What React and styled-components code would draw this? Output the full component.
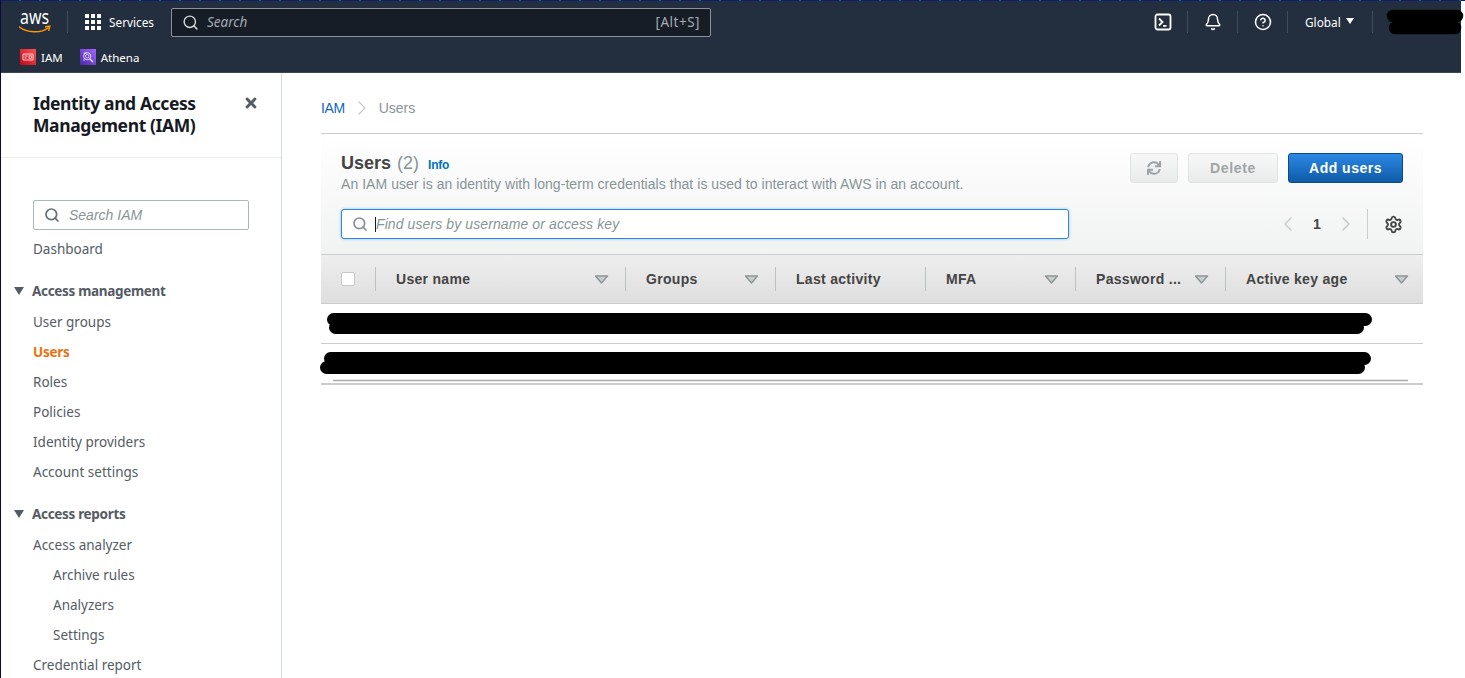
import React from 'react';
import styled, { createGlobalStyle } from 'styled-components';
import { Search, Bell, CircleHelp, Settings, ChevronLeft, ChevronRight } from 'lucide-react';
import { FaTimes, FaSync } from 'react-icons/fa';

const Global = createGlobalStyle`
  html, body { margin: 0; padding: 0; background: #fff; }
  * { box-sizing: border-box; }
`;

const Page = styled.div`
  width: 1465px; height: 678px; overflow: hidden; position: relative;
  background: #fff; border-left: 1px solid #0b0b3b;
  font-family: "Liberation Sans", Arial, sans-serif;
`;
const TopEdge = styled.div`
  height: 1px; width: 1464px;
  background: repeating-linear-gradient(90deg, #0a1f6e 0 18px, #0f6c8c 18px 20px);
`;
const Header = styled.header`
  width: 1460px; height: 72px; background: #232f3e; color: #fff;
  border-bottom: 1px solid #3d4754;
  font-family: "Noto Sans", sans-serif;
  display: flex; flex-direction: column;
`;
const TopRow = styled.div`
  height: 42px; flex: none; display: flex; align-items: center; padding-left: 18px;
`;
const Logo = styled.svg`width: 32px; height: 24px; flex: none; overflow: visible;`;
const VLine = styled.span`
  width: 1px; height: 22px; background: #414d5c; flex: none;
  margin-left: ${p => p.$ml || 0}px;
`;
const Services = styled.div`
  display: flex; align-items: center; gap: 8px; margin-left: 17px; font-size: 11.8px; color: #fff; width: 70px;
`;
const GridIcon = styled.div`
  display: grid; grid-template-columns: repeat(3, 4px); gap: 2px;
  & > i { display: block; width: 4px; height: 4px; background: #fff; }
`;
const GlobalSearch = styled.div`
  margin-left: 16px; width: 540px; height: 29px; background: #161d26;
  border: 1px solid #8d9299; border-radius: 2px;
  display: flex; align-items: center; padding: 0 10px 0 10px; gap: 8px;
  color: #d5dbdb; font-size: 13.5px;
`;
const SearchHint = styled.span`flex: 1; font-style: italic; color: #a5abb2;`;
const Shortcut = styled.span`color: #a5abb2; font-size: 13.5px; letter-spacing: .5px;`;
const Tools = styled.div`
  margin-left: auto; display: flex; align-items: center; height: 100%;
`;
const ToolCell = styled.div`
  width: 49px; display: flex; justify-content: center; align-items: center;
`;
const Region = styled.div`
  display: flex; align-items: center; gap: 5px; font-size: 11.8px; padding-left: 17px; width: 84px;
  &::after { content: ""; border-left: 4.5px solid transparent; border-right: 4.5px solid transparent; border-top: 6px solid #fff; margin-top: -2px; }
`;
const AccountSlot = styled.div`width: 88px;`;
const Favs = styled.div`
  display: flex; align-items: center; padding-left: 19px; gap: 17px; font-size: 11.5px; height: 28px;
`;
const Fav = styled.div`display: flex; align-items: center; gap: 5px;`;
const FavIcon = styled.svg`width: 16px; height: 16px; flex: none;`;

const Body = styled.div`display: flex; height: 605px;`;
const Side = styled.aside`
  width: 281px; flex: none; border-right: 1px solid #d5dbdb; color: #545b64;
  font-family: "Noto Sans", sans-serif; font-size: 13.5px; overflow: hidden;
`;
const SideHead = styled.div`
  height: 85px; border-bottom: 1px solid #eaeded; padding: 20px 22px 0 32px;
  display: flex; justify-content: space-between; align-items: flex-start;
`;
const SideTitle = styled.div`
  font-size: 17.5px; line-height: 22px; font-weight: 700; color: #16191f; width: 190px;
  letter-spacing: -.4px; margin-top: -1px;
`;
const CloseBtn = styled.span`color: #545b64; font-size: 16px; line-height: 22px; margin-top: 2px; display: flex; align-items: center;`;
const SideSearch = styled.div`
  margin: 42px 0 4px 32px; width: 216px; height: 30px; border: 1px solid #aab7b8; border-radius: 2px;
  display: flex; align-items: center; padding-left: 10px; gap: 9px;
  color: #879596; font-style: italic; font-family: "Liberation Sans", sans-serif; font-size: 14px;
`;
const NavLink = styled.div`
  height: 30px; line-height: 30px;
  padding-left: ${p => (p.$sub ? 52 : 32)}px;
  color: ${p => (p.$active ? '#ec7211' : '#545b64')};
  font-weight: ${p => (p.$active ? 700 : 400)};
  letter-spacing: ${p => (p.$active ? '-.3px' : '0')};
  white-space: nowrap;
`;
const NavSection = styled.div`
  height: 30px; line-height: 30px; margin-top: 12px; margin-bottom: 1px;
  padding-left: 13px; display: flex; align-items: center; gap: 8px;
  font-weight: 700; color: #545b64; white-space: nowrap; letter-spacing: -.32px;
  &::before { content: ""; border-left: 5.5px solid transparent; border-right: 5.5px solid transparent; border-top: 8px solid #545b64; }
`;

const Main = styled.main`flex: 1; padding: 0 42px 0 39px; min-width: 0;`;
const Crumbs = styled.div`
  height: 60px; padding-top: 10px; display: flex; align-items: center; gap: 5px; font-size: 14px; color: #879596;
`;
const CrumbLink = styled.span`color: #1166bb; letter-spacing: -.4px;`;
const Panel = styled.section`
  border-top: 1px solid #ccc;
`;
const PanelHead = styled.div`
  height: 120px; padding: 19px 20px 0;
  background: linear-gradient(#fff, #f1f2f2);
`;
const HeadRow = styled.div`display: flex; justify-content: space-between; align-items: flex-start;`;
const TitleLine = styled.div`display: flex; align-items: baseline; gap: 10px; font-size: 18px; line-height: 20px;`;
const Title = styled.h1`margin: 0; font-size: 18px; font-weight: 700; color: #444;`;
const Count = styled.span`color: #879596; font-weight: 400; margin-left: -4px;`;
const Info = styled.span`color: #0073bb; font-size: 12px; font-weight: 700; letter-spacing: -.2px; margin-left: -1px;`;
const Desc = styled.div`color: #879596; font-size: 14px; line-height: 16px; margin-top: 1px; letter-spacing: .05px;`;
const Actions = styled.div`display: flex; gap: 10px;`;
const Btn = styled.button`
  height: 30px; width: ${p => p.$w}px; border-radius: 3px; padding: 0;
  font: 700 14px "Liberation Sans", sans-serif; letter-spacing: .7px;
  display: flex; align-items: center; justify-content: center;
  color: #a0a5a6; border: 1px solid #e1e4e4;
  background: linear-gradient(#f7f7f7, #e9ebeb);
`;
const PrimaryBtn = styled(Btn)`
  color: #fff; border-color: #0a4a8a; letter-spacing: .5px;
  background: linear-gradient(#2b88e3, #0f5ba8);
`;
const HeadRow2 = styled.div`display: flex; align-items: center; margin-top: 19px; margin-top: 17px;`;
const Filter = styled.div`
  width: 728px; height: 30px; background: #fff; border: 1px solid #2b88e3; border-radius: 3px;
  box-shadow: 0 0 3px #8cc0f0;
  display: flex; align-items: center; padding-left: 10px; gap: 7px;
  color: #879596; font-style: italic; font-size: 14px; letter-spacing: .1px;
`;
const Caret = styled.span`width: 1px; height: 15px; background: #16191f; margin-right: -7px;`;
const Pager = styled.div`
  margin-left: auto; display: flex; align-items: center; height: 30px; color: #444; font-size: 14px; font-weight: 700;
`;
const PageNum = styled.span`width: 34px; text-align: center;`;
const PagerSep = styled.span`width: 1px; height: 30px; background: #ccc; margin: 0 16px 0 9px;`;
const GearWrap = styled.span`display: flex;`;
const TableHead = styled.div`
  height: 50px; display: grid; grid-template-columns: 54px 250px 150px 150px 150px 150px 198px;
  align-items: center; background: linear-gradient(#eeeeee, #dedede);
  border-top: 1px solid #ccc; border-bottom: 1px solid #ccc;
`;
const CheckCell = styled.div`padding-left: 20px;`;
const Check = styled.span`
  display: block; width: 14px; height: 14px; background: #fff; border: 1px solid #c4c9ca; border-radius: 2px;
`;
const HeadCell = styled.div`
  height: 24px; border-left: 1px solid #bcc1c2; padding: 0 16px 0 20px;
  display: flex; align-items: center; justify-content: space-between;
  font-size: 14px; font-weight: 700; color: #444; letter-spacing: .3px; white-space: nowrap;
  &:last-child { padding-right: 14px; }
`;
const SortIcon = styled.svg`width: 15px; height: 9px; flex: none;`;
const Row = styled.div`
  height: ${p => p.$h}px; position: relative; border-bottom: ${p => p.$b}px solid #ccc;
`;
const Redaction = styled.svg`
  position: absolute; overflow: visible; left: 0; top: 0; width: 1px; height: 1px; pointer-events: none;
`;

const Sort = () => (
  <SortIcon viewBox="0 0 15 9"><path d="M1.5 1h12L7.5 8z" fill="#c9cccc" stroke="#8f9597" strokeWidth="1.4" strokeLinejoin="round" /></SortIcon>
);

const cols = ['User name', 'Groups', 'Last activity', 'MFA', 'Password ...', 'Active key age'];
const sorted = { 'User name': 1, Groups: 1, MFA: 1, 'Password ...': 1, 'Active key age': 1 };

export default function App() {
  return (
    <Page>
      <Global />
      <TopEdge />
      <Header>
        <TopRow>
          <Logo viewBox="0 0 32 24">
            <text x="1" y="14" textLength="29" lengthAdjust="spacingAndGlyphs" fontFamily="'Noto Sans', sans-serif" fontSize="20" fill="#fff">aws</text>
            <path d="M.5 17C8 23 22 23.5 29 18" fill="none" stroke="#f90" strokeWidth="1.5" strokeLinecap="round" />
            <path d="M26.5 16.8l4.3-.6-1 4.2" fill="none" stroke="#f90" strokeWidth="1.4" strokeLinecap="round" />
          </Logo>
          <VLine $ml={16} />
          <Services>
            <GridIcon>{Array.from({ length: 9 }, (_, i) => <i key={i} />)}</GridIcon>
            <span>Services</span>
          </Services>
          <GlobalSearch>
            <Search size={17} color="#d5dbdb" strokeWidth={2} />
            <SearchHint>Search</SearchHint>
            <Shortcut>[Alt+S]</Shortcut>
          </GlobalSearch>
          <Tools>
            <ToolCell>
              <svg width="18" height="18" viewBox="0 0 18 18" fill="none" stroke="#fff" strokeWidth="1.8">
                <rect x="1.5" y="1.5" width="15" height="15" rx="2" />
                <path d="M5 5.5L8.5 9 5 12.5M9 12.8h3.5" />
              </svg>
            </ToolCell>
            <VLine />
            <ToolCell><Bell size={18} strokeWidth={2} /></ToolCell>
            <VLine />
            <ToolCell><CircleHelp size={18} strokeWidth={2} /></ToolCell>
            <VLine />
            <Region>Global</Region>
            <VLine />
            <AccountSlot />
          </Tools>
        </TopRow>
        <Favs>
          <Fav>
            <FavIcon viewBox="0 0 16 16">
              <defs><linearGradient id="iamg" x1="0" y1="1" x2="1" y2="0"><stop offset="0" stopColor="#bd0816" /><stop offset="1" stopColor="#ff5252" /></linearGradient></defs>
              <rect width="16" height="16" fill="url(#iamg)" />
              <path d="M3 5h10v6H3z" fill="none" stroke="#fff" strokeWidth=".8" />
              <path d="M4.5 7h3M4.5 9h2" stroke="#fff" strokeWidth=".8" />
              <rect x="9" y="6.8" width="2.4" height="2.4" fill="none" stroke="#fff" strokeWidth=".7" />
            </FavIcon>
            <span>IAM</span>
          </Fav>
          <Fav>
            <FavIcon viewBox="0 0 16 16">
              <defs><linearGradient id="athg" x1="0" y1="1" x2="1" y2="0"><stop offset="0" stopColor="#4d27a8" /><stop offset="1" stopColor="#a166ff" /></linearGradient></defs>
              <rect width="16" height="16" fill="url(#athg)" />
              <circle cx="7.2" cy="7.2" r="3.6" fill="none" stroke="#fff" strokeWidth=".8" />
              <circle cx="7.2" cy="7.2" r="1.8" fill="none" stroke="#fff" strokeWidth=".6" />
              <path d="M10 10l3 3" stroke="#fff" strokeWidth="1.1" />
              <path d="M3.5 4h3M3 11h2" stroke="#fff" strokeWidth=".6" />
            </FavIcon>
            <span>Athena</span>
          </Fav>
        </Favs>
      </Header>
      <Redaction>
        <path d="M1392 16H1456M1394 28H1454" stroke="#000" strokeWidth="12.5" strokeLinecap="round" />
      </Redaction>
      <Body>
        <Side>
          <SideHead>
            <SideTitle>Identity and Access Management (IAM)</SideTitle>
            <CloseBtn><FaTimes /></CloseBtn>
          </SideHead>
          <SideSearch><Search size={16} color="#687078" strokeWidth={2.6} /><span>Search IAM</span></SideSearch>
          <NavLink>Dashboard</NavLink>
          <NavSection>Access management</NavSection>
          <NavLink>User groups</NavLink>
          <NavLink $active>Users</NavLink>
          <NavLink>Roles</NavLink>
          <NavLink>Policies</NavLink>
          <NavLink>Identity providers</NavLink>
          <NavLink>Account settings</NavLink>
          <NavSection>Access reports</NavSection>
          <NavLink>Access analyzer</NavLink>
          <NavLink $sub>Archive rules</NavLink>
          <NavLink $sub>Analyzers</NavLink>
          <NavLink $sub>Settings</NavLink>
          <NavLink>Credential report</NavLink>
        </Side>
        <Main>
          <Crumbs>
            <CrumbLink>IAM</CrumbLink>
            <ChevronRight size={24} color="#c5cbcc" strokeWidth={1.4} />
            <span>Users</span>
          </Crumbs>
          <Panel>
            <PanelHead>
              <HeadRow>
                <div>
                  <TitleLine>
                    <Title>Users</Title>
                    <Count>(2)</Count>
                    <Info>Info</Info>
                  </TitleLine>
                  <Desc>An IAM user is an identity with long-term credentials that is used to interact with AWS in an account.</Desc>
                </div>
                <Actions>
                  <Btn $w={48} aria-label="Refresh"><FaSync size={14} color="#9aa3a5" /></Btn>
                  <Btn $w={90}>Delete</Btn>
                  <PrimaryBtn $w={115}>Add users</PrimaryBtn>
                </Actions>
              </HeadRow>
              <HeadRow2>
                <Filter>
                  <Search size={16} color="#879596" strokeWidth={2.6} />
                  <Caret />
                  <span>Find users by username or access key</span>
                </Filter>
                <Pager>
                  <ChevronLeft size={24} color="#c5cbcc" strokeWidth={1.5} />
                  <PageNum>1</PageNum>
                  <ChevronRight size={24} color="#c5cbcc" strokeWidth={1.5} />
                  <PagerSep />
                  <GearWrap><Settings size={19} color="#444" strokeWidth={2.4} /></GearWrap>
                </Pager>
              </HeadRow2>
            </PanelHead>
            <TableHead>
              <CheckCell><Check /></CheckCell>
              {cols.map(c => (
                <HeadCell key={c}><span>{c}</span>{sorted[c] && <Sort />}</HeadCell>
              ))}
            </TableHead>
            <Row $h={40} $b={1}>
              <Redaction>
                <path d="M12.5 15.5H1044.5M14.5 23.5H1036.5" stroke="#000" strokeWidth="13" strokeLinecap="round" />
              </Redaction>
            </Row>
            <Row $h={41} $b={2}>
              <Redaction>
                <path d="M9.5 14.5H1043.5M5.5 23.5H1037.5" stroke="#000" strokeWidth="13" strokeLinecap="round" />
                <path d="M12 36.5H1087" stroke="#aaa" strokeWidth="1.6" />
              </Redaction>
            </Row>
          </Panel>
        </Main>
      </Body>
    </Page>
  );
}
